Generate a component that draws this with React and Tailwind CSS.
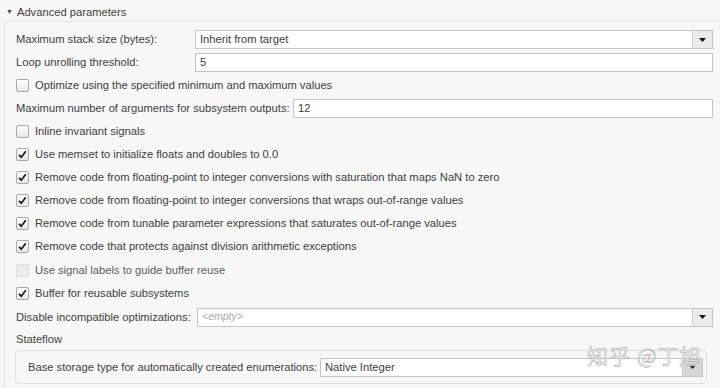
import React from 'react';

const Check = ({ checked, disabled }) => (
  <span
    className={`w-[13px] h-[13px] shrink-0 rounded-[2px] border flex items-center justify-center ${
      disabled
        ? 'border-[#dcdcdc] bg-[#ededed]'
        : 'border-[#a9a9a9] bg-gradient-to-b from-white to-[#e6e6e6]'
    }`}
  >
    {checked && (
      <svg width="11" height="11" viewBox="0 0 11 11">
        <path d="M2 5.8 L4.3 8.2 L8.8 2.2" fill="none" stroke="#1a1a1a" strokeWidth="1.7" />
      </svg>
    )}
  </span>
);

const Arrow = ({ dark }) => (
  <span
    className={`w-[20px] self-stretch flex items-center justify-center border-l border-[#cfcfcf] ${
      dark ? 'bg-[#d6d6d6]' : 'bg-[#ebebeb]'
    }`}
  >
    <svg width="7" height="4" viewBox="0 0 7 4">
      <path d="M0 0 H7 L3.5 4 Z" fill="#111" />
    </svg>
  </span>
);

const CheckRow = ({ label, checked, disabled, h = 'h-[23px]' }) => (
  <div className={`${h} flex items-center gap-[6px]`}>
    <Check checked={checked} disabled={disabled} />
    <span className={disabled ? 'text-[#5c5c5c]' : ''}>{label}</span>
  </div>
);

const App = () => {
  return (
    <div className="relative w-[720px] h-[388px] overflow-hidden whitespace-nowrap bg-[#f7f7f7] text-[11.2px] text-[#404040] font-['Liberation_Sans',Arial,sans-serif]">
      {/* header */}
      <div className="h-[21px] flex items-center pt-[3px] pl-[6px] gap-[4px]">
        <span className="text-[7px] text-[#444]">▼</span>
        <span>Advanced parameters</span>
      </div>

      <div className="ml-[4px] border-l border-t border-[#e4e4e4] rounded-tl-[4px] pt-[6px] pl-[11px] pr-[7px] h-[400px]">
        <div className="h-[23px] flex items-center">
          <span className="w-[179px] shrink-0">Maximum stack size (bytes):</span>
          <div className="flex-1 h-[19px] flex items-center border border-[#c4c4c4] bg-white">
            <span className="flex-1 pl-[4px]">Inherit from target</span>
            <Arrow />
          </div>
        </div>

        <div className="h-[23px] flex items-center">
          <span className="w-[179px] shrink-0">Loop unrolling threshold:</span>
          <div className="flex-1 h-[19px] flex items-center border border-[#c4c4c4] bg-white pl-[4px]">5</div>
        </div>

        <CheckRow label="Optimize using the specified minimum and maximum values" />

        <div className="h-[23px] flex items-center">
          <span className="w-[277px] shrink-0">Maximum number of arguments for subsystem outputs:</span>
          <div className="flex-1 h-[19px] flex items-center border border-[#c4c4c4] bg-white pl-[4px]">12</div>
        </div>

        <CheckRow label="Inline invariant signals" />
        <CheckRow checked label="Use memset to initialize floats and doubles to 0.0" />
        <CheckRow checked label="Remove code from floating-point to integer conversions with saturation that maps NaN to zero" />
        <CheckRow checked label="Remove code from floating-point to integer conversions that wraps out-of-range values" />
        <CheckRow checked label="Remove code from tunable parameter expressions that saturates out-of-range values" />
        <CheckRow checked label="Remove code that protects against division arithmetic exceptions" />
        <CheckRow disabled h="h-[24px]" label="Use signal labels to guide buffer reuse" />
        <CheckRow checked label="Buffer for reusable subsystems" />

        <div className="h-[24px] flex items-center">
          <span className="w-[181px] shrink-0">Disable incompatible optimizations:</span>
          <div className="flex-1 h-[19px] flex items-center border border-[#c4c4c4] bg-white">
            <span className="flex-1 pl-[4px] italic text-[10.5px] text-[#a8a8a8]">&lt;empty&gt;</span>
            <Arrow />
          </div>
        </div>

        <div className="h-[21px] flex items-center">Stateflow</div>

        <div className="-ml-[1px] mr-[6px] h-[34px] border border-[#e0e0e0] rounded-[4px] flex items-center pl-[12px] pr-[3px]">
          <span className="w-[292px] shrink-0">Base storage type for automatically created enumerations:</span>
          <div className="flex-1 h-[19px] flex items-center border border-[#c4c4c4] bg-white">
            <span className="flex-1 pl-[4px]">Native Integer</span>
            <Arrow dark />
          </div>
        </div>
      </div>

      {/* watermark */}
      <div className="absolute left-[587px] top-[342px] text-[21px] leading-[26px] tracking-[1px] text-white/80 [-webkit-text-stroke:0.5px_#9a9a9a] font-['Noto_Sans_CJK_SC',sans-serif] pointer-events-none">
        知乎 @丁旭
      </div>
    </div>
  );
};

export default App;
